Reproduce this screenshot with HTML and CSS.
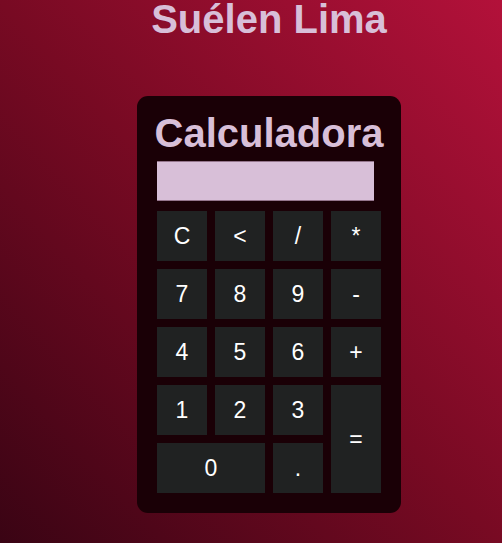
FILE: index.html
```html
<!DOCTYPE html>
<html lang="pt-BR">
<head>
<meta charset="utf-8">
<title>Calculadora</title>
<link rel="stylesheet" href="styles.css">
</head>
<body>
<div class="page">
  <h1 class="name">Suélen Lima</h1>
  <div class="calc">
    <h2 class="calc-title">Calculadora</h2>
    <div class="display"></div>
    <div class="keys">
      <button class="key">C</button>
      <button class="key">&lt;</button>
      <button class="key">/</button>
      <button class="key">*</button>
      <button class="key">7</button>
      <button class="key">8</button>
      <button class="key">9</button>
      <button class="key">-</button>
      <button class="key">4</button>
      <button class="key">5</button>
      <button class="key">6</button>
      <button class="key">+</button>
      <button class="key">1</button>
      <button class="key">2</button>
      <button class="key">3</button>
      <button class="key key-eq">=</button>
      <button class="key key-zero">0</button>
      <button class="key">.</button>
    </div>
  </div>
</div>
</body>
</html>
```
FILE: styles.css
```css
html, body {
  margin: 0;
  padding: 0;
  height: 100%;
}
body {
  background: linear-gradient(to top right, #3a0414 0%, #780a23 50%, #b3113a 100%);
  font-family: "Liberation Sans", Arial, sans-serif;
  overflow: hidden;
}
.page {
  display: flex;
  flex-direction: column;
  align-items: center;
  padding-left: 36px;
}
.name {
  margin: -4px 0 0 0;
  font-size: 40px;
  line-height: 46px;
  font-weight: bold;
  color: #d8bfd8;
}
.calc {
  margin-top: 54px;
  background: #1a0006;
  border-radius: 11px;
  padding: 14px 20px 20px 20px;
  width: 224px;
}
.calc-title {
  margin: 0 -20px;
  font-size: 40px;
  line-height: 46px;
  font-weight: bold;
  color: #d8bfd8;
  text-align: center;
}
.display {
  margin-top: 5px;
  width: 217px;
  height: 38px;
  background: #d8bfd8;
  border-top: 1px solid #94758c;
  border-bottom: 1px solid #94758c;
}
.keys {
  margin-top: 10px;
  display: grid;
  grid-template-columns: repeat(4, 50px);
  grid-auto-rows: 50px;
  gap: 8px;
}
.key {
  background: #202222;
  border: none;
  color: #ffffff;
  font-family: "Liberation Sans", Arial, sans-serif;
  font-size: 23px;
  padding: 0;
  margin: 0;
}
.key-eq {
  grid-column: 4;
  grid-row: 4 / span 2;
}
.key-zero {
  grid-column: 1 / span 2;
}
```
